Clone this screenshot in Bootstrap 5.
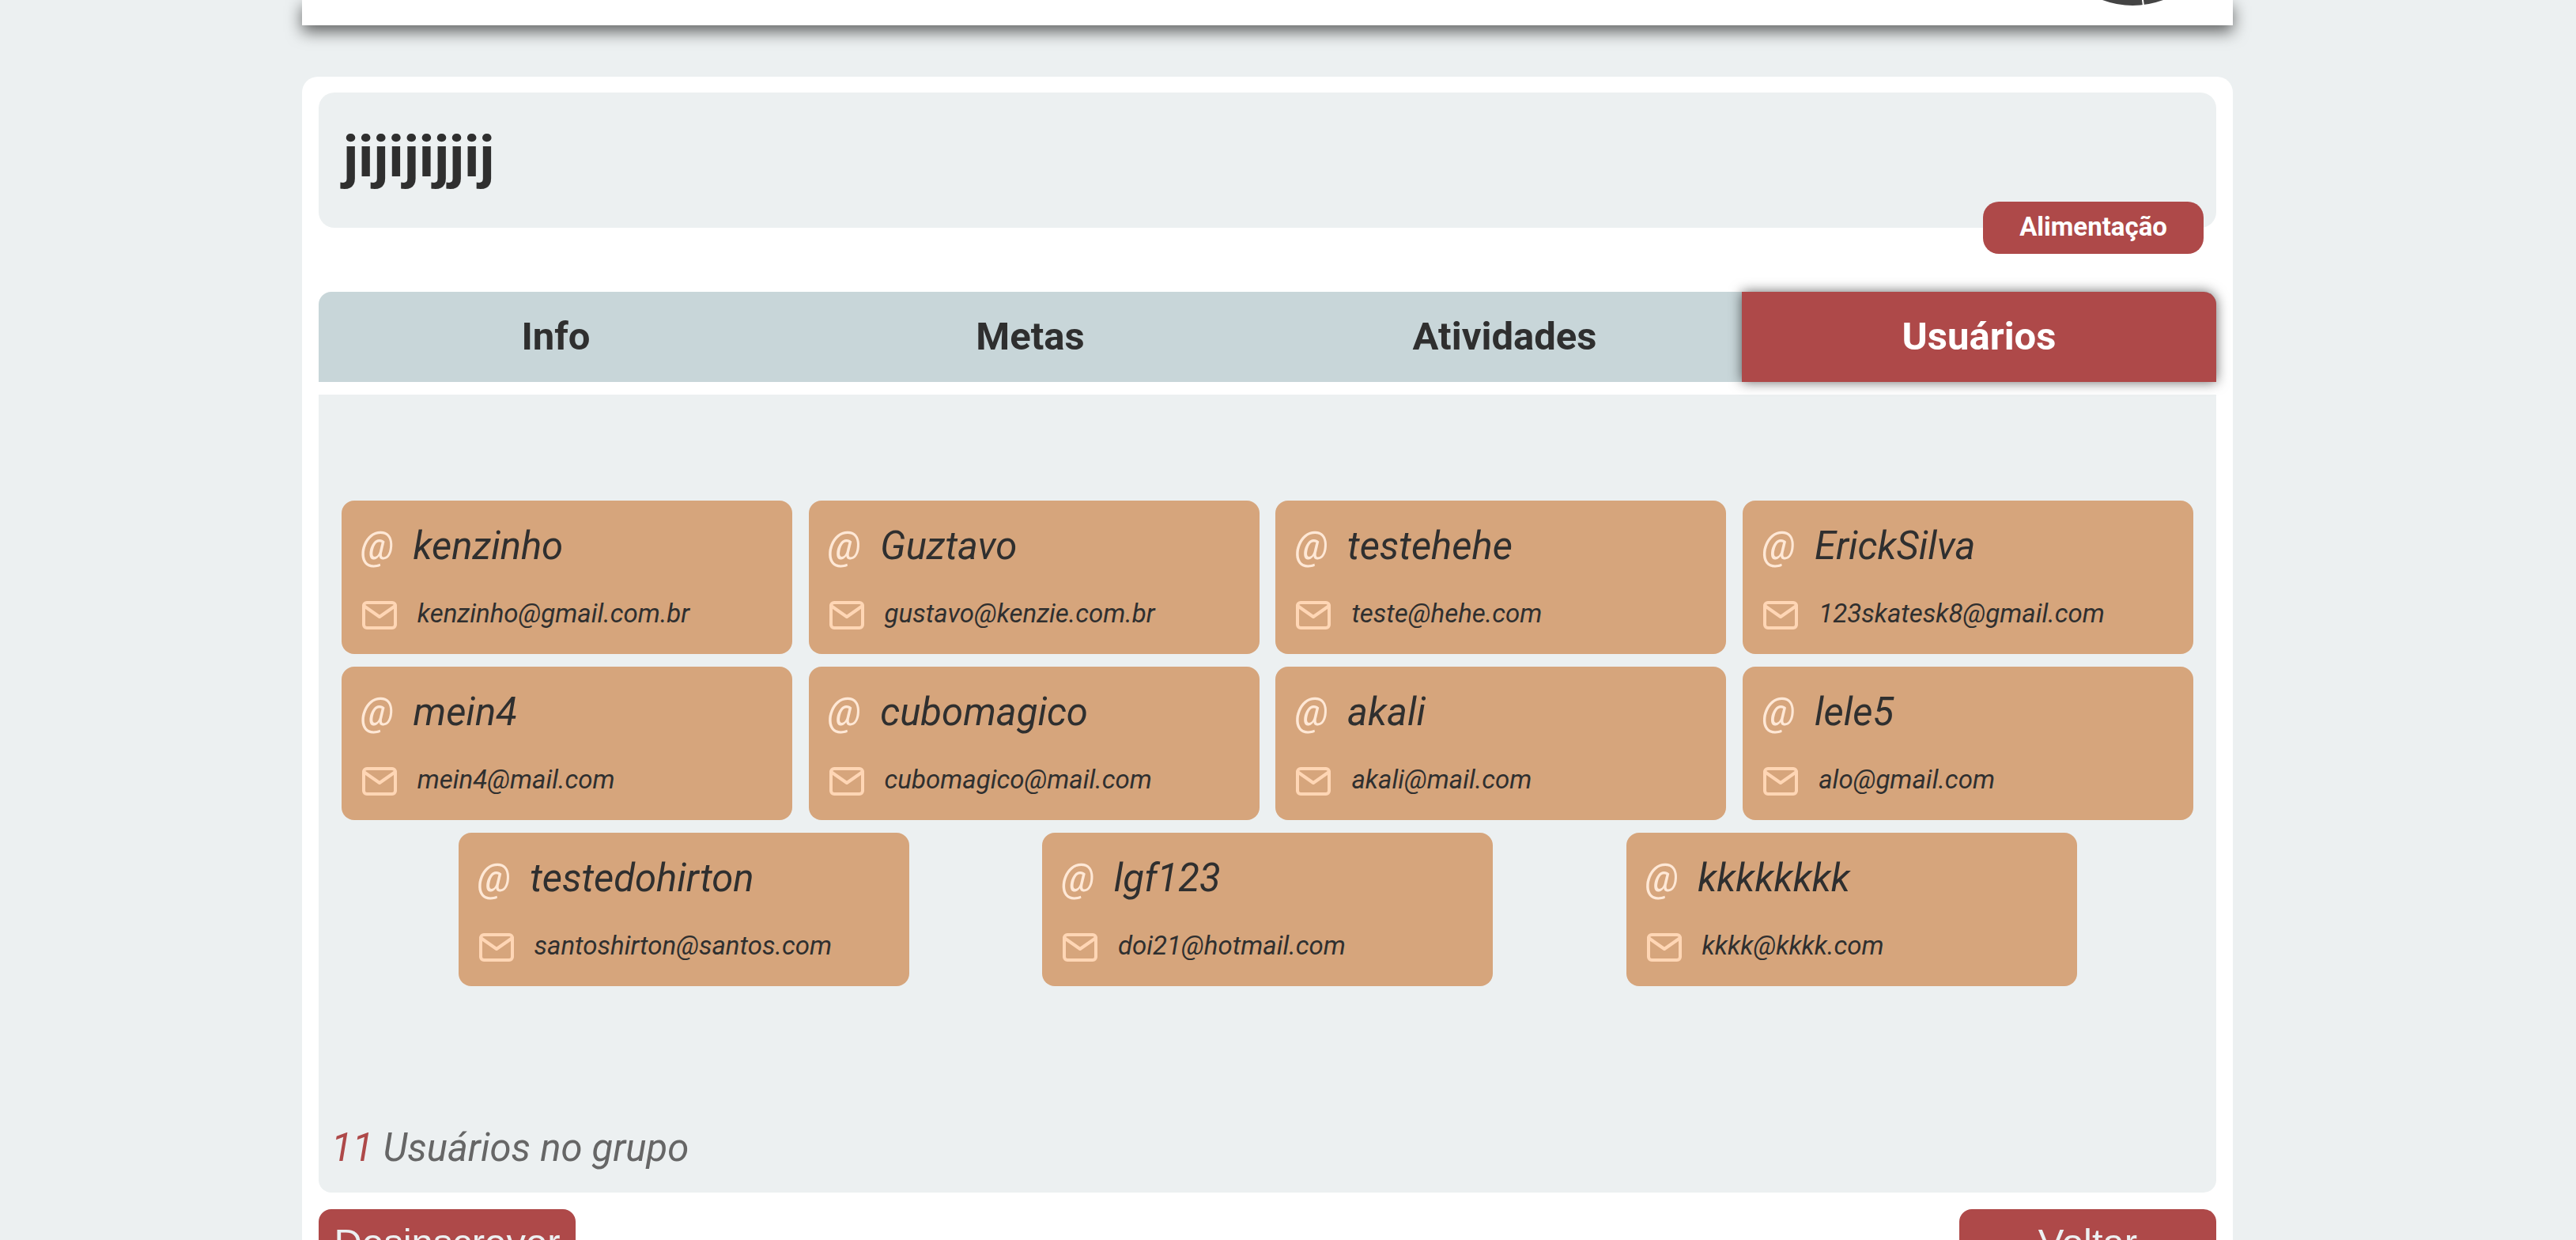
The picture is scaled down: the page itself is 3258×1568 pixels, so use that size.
<!DOCTYPE html>
<html lang="pt-BR">
<head>
<meta charset="utf-8">
<meta name="viewport" content="width=device-width, initial-scale=1">
<title>Grupo</title>
<link href="https://cdn.jsdelivr.net/npm/bootstrap@5.3.0/dist/css/bootstrap.min.css" rel="stylesheet">
<style>
  :root { --ink: #2f2f2f; --fog: #ecf0f1; --brick: #ae4949; --sky: #c8d6d9; --clay: #d6a57c; }
  body { background: var(--fog); color: var(--ink); font-family: Roboto, "Liberation Sans", sans-serif; font-size: 33px; padding-right: 52px; overflow-x: hidden; }
  .shell { max-width: 2442px; }
  .topbar { height: 32px; background: #fff; box-shadow: 0 8px 20px rgba(0,0,0,.6); padding-right: 84px; }
  .topbar svg { width: 84px; height: 8px; display: block; }
  .board { background: #fff; border-radius: 20px; margin-top: 65px; padding: 20px 21px 24px; }
  .title-box { background: var(--fog); border-radius: 20px; padding: 39px 31px 47px; }
  .title-box h1 { font-size: 73px; line-height: 85px; font-weight: 700; }
  .category { right: 16px; bottom: -33px; height: 66px; padding: 0 46px; border-radius: 20px; background: var(--brick); color: #fff; line-height: 64px; font-weight: 700; }
  .tabs { margin-top: 81px; border-radius: 16px 16px 0 0; background: var(--sky); }
  .tabs button { height: 114px; border: 0; border-radius: 0; background: transparent; color: var(--ink); font-size: 49px; line-height: 56px; font-weight: 700; }
  .tabs button.active { background: var(--brick); color: #fff; border-radius: 0 16px 0 0; box-shadow: 0 0 16px rgba(0,0,0,.6); }
  .panel { background: var(--fog); border-radius: 0 0 16px 16px; margin-top: 16px; padding: 134px 8px 28px; }
  .people { row-gap: 16px; justify-content: space-evenly; }
  .person { width: 570px; background: var(--clay); border-radius: 16px; padding: 26px 24px 25px; gap: 31px; font-style: italic; }
  .person .line { gap: 24px; }
  .person .handle { font-size: 49px; line-height: 64px; }
  .person .at { color: #ffe8d6; }
  .person a { color: var(--ink); line-height: 44px; }
  .person svg { width: 48px; height: 48px; stroke: #ffd6b5; }
  .total { font-size: 49px; line-height: 56px; font-style: italic; color: #666; padding-left: 8px; margin-top: 177px; }
  .total span { color: var(--brick); }
  .actions { margin-top: 21px; }
  .actions button { width: 325px; height: 84px; border: 0; border-radius: 16px; background: var(--brick); color: var(--fog); font-family: "Liberation Sans", Arial, sans-serif; font-size: 49px; line-height: 56px; }
</style>
</head>
<body>
<svg class="d-none" aria-hidden="true">
  <symbol id="mail" viewBox="0 0 24 24" fill="none" stroke-width="2" stroke-linecap="round" stroke-linejoin="round">
    <path d="M4 4h16c1.100 0 2 .9 2 2v12c0 1.100-.9 2-2 2H4c-1.100 0-2-.9-2-2V6c0-1.100.9-2 2-2z"/>
    <polyline points="22,6 12,13 2,6"/>
  </symbol>
</svg>
<div class="shell mx-auto">
  <header class="topbar d-flex justify-content-end align-items-start">
    <svg viewBox="0 0 84 8" aria-hidden="true">
      <path d="M3 0Q41 14 80 0z" fill="#444"/>
      <path d="M54 0l1 8" stroke="#fff" stroke-width="2"/>
    </svg>
  </header>

  <main class="board">
    <section class="title-box position-relative">
      <h1 class="m-0">jijijijjij</h1>
      <span class="category position-absolute">Alimentação</span>
    </section>

    <nav class="tabs d-flex" aria-label="Seções do grupo">
      <button type="button" class="btn flex-fill w-25">Info</button>
      <button type="button" class="btn flex-fill w-25">Metas</button>
      <button type="button" class="btn flex-fill w-25">Atividades</button>
      <button type="button" class="btn flex-fill w-25 active">Usuários</button>
    </nav>

    <section class="panel">
      <ul class="people list-unstyled d-flex flex-wrap m-0">
        <li class="person d-flex flex-column"><div class="line handle d-flex"><span class="at">@</span><span>kenzinho</span></div><div class="line d-flex"><svg aria-hidden="true"><use href="#mail"/></svg><a class="text-decoration-none" href="mailto:kenzinho@gmail.com.br">kenzinho@gmail.com.br</a></div></li>
        <li class="person d-flex flex-column"><div class="line handle d-flex"><span class="at">@</span><span>Guztavo</span></div><div class="line d-flex"><svg aria-hidden="true"><use href="#mail"/></svg><a class="text-decoration-none" href="mailto:gustavo@kenzie.com.br">gustavo@kenzie.com.br</a></div></li>
        <li class="person d-flex flex-column"><div class="line handle d-flex"><span class="at">@</span><span>testehehe</span></div><div class="line d-flex"><svg aria-hidden="true"><use href="#mail"/></svg><a class="text-decoration-none" href="mailto:teste@hehe.com">teste@hehe.com</a></div></li>
        <li class="person d-flex flex-column"><div class="line handle d-flex"><span class="at">@</span><span>ErickSilva</span></div><div class="line d-flex"><svg aria-hidden="true"><use href="#mail"/></svg><a class="text-decoration-none" href="mailto:123skatesk8@gmail.com">123skatesk8@gmail.com</a></div></li>
        <li class="person d-flex flex-column"><div class="line handle d-flex"><span class="at">@</span><span>mein4</span></div><div class="line d-flex"><svg aria-hidden="true"><use href="#mail"/></svg><a class="text-decoration-none" href="mailto:mein4@mail.com">mein4@mail.com</a></div></li>
        <li class="person d-flex flex-column"><div class="line handle d-flex"><span class="at">@</span><span>cubomagico</span></div><div class="line d-flex"><svg aria-hidden="true"><use href="#mail"/></svg><a class="text-decoration-none" href="mailto:cubomagico@mail.com">cubomagico@mail.com</a></div></li>
        <li class="person d-flex flex-column"><div class="line handle d-flex"><span class="at">@</span><span>akali</span></div><div class="line d-flex"><svg aria-hidden="true"><use href="#mail"/></svg><a class="text-decoration-none" href="mailto:akali@mail.com">akali@mail.com</a></div></li>
        <li class="person d-flex flex-column"><div class="line handle d-flex"><span class="at">@</span><span>lele5</span></div><div class="line d-flex"><svg aria-hidden="true"><use href="#mail"/></svg><a class="text-decoration-none" href="mailto:alo@gmail.com">alo@gmail.com</a></div></li>
        <li class="person d-flex flex-column"><div class="line handle d-flex"><span class="at">@</span><span>testedohirton</span></div><div class="line d-flex"><svg aria-hidden="true"><use href="#mail"/></svg><a class="text-decoration-none" href="mailto:santoshirton@santos.com">santoshirton@santos.com</a></div></li>
        <li class="person d-flex flex-column"><div class="line handle d-flex"><span class="at">@</span><span>lgf123</span></div><div class="line d-flex"><svg aria-hidden="true"><use href="#mail"/></svg><a class="text-decoration-none" href="mailto:doi21@hotmail.com">doi21@hotmail.com</a></div></li>
        <li class="person d-flex flex-column"><div class="line handle d-flex"><span class="at">@</span><span>kkkkkkkk</span></div><div class="line d-flex"><svg aria-hidden="true"><use href="#mail"/></svg><a class="text-decoration-none" href="mailto:kkkk@kkkk.com">kkkk@kkkk.com</a></div></li>
      </ul>
      <p class="total mb-0"><span>11</span> Usuários no grupo</p>
    </section>

    <div class="actions d-flex justify-content-between">
      <button type="button" class="btn p-0">Desinscrever</button>
      <button type="button" class="btn p-0">Voltar</button>
    </div>
  </main>
</div>
<script src="https://cdn.jsdelivr.net/npm/bootstrap@5.3.0/dist/js/bootstrap.bundle.min.js"></script>
</body>
</html>
